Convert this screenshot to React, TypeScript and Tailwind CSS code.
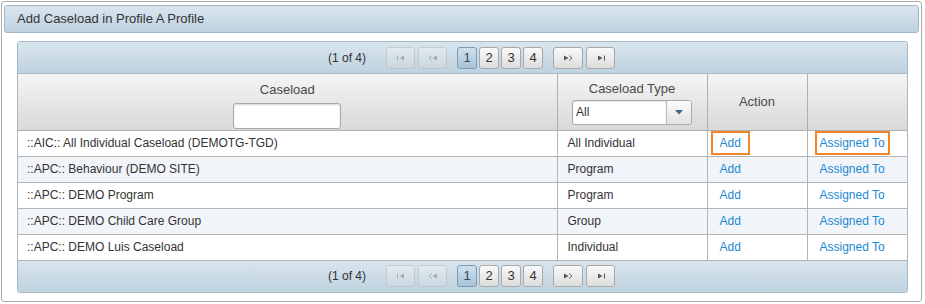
import React from "react";

const rows = [
  { name: "::AIC:: All Individual Caseload (DEMOTG-TGD)", type: "All Individual", focus: true },
  { name: "::APC:: Behaviour (DEMO SITE)", type: "Program" },
  { name: "::APC:: DEMO Program", type: "Program" },
  { name: "::APC:: DEMO Child Care Group", type: "Group" },
  { name: "::APC:: DEMO Luis Caseload", type: "Individual" },
];

function NavIcon({ kind }: { kind: "first" | "prev" | "next" | "last" }) {
  return (
    <svg width="10" height="6" viewBox="0 0 10 6" fill="#555" aria-hidden="true">
      {kind === "first" && (
        <>
          <rect x="1" y="0.5" width="1" height="5" />
          <path d="M8 0.5 L3.5 3 L8 5.5 Z" />
        </>
      )}
      {kind === "prev" && (
        <>
          <path d="M4 0.5 L1 3 L4 5.5" fill="none" stroke="#555" strokeWidth="0.9" />
          <path d="M9 0.5 L4.5 3 L9 5.5 Z" />
        </>
      )}
      {kind === "next" && (
        <>
          <path d="M1 0.5 L5.5 3 L1 5.5 Z" />
          <path d="M6 0.5 L9 3 L6 5.5" fill="none" stroke="#555" strokeWidth="0.9" />
        </>
      )}
      {kind === "last" && (
        <>
          <path d="M2 0.5 L6.5 3 L2 5.5 Z" />
          <rect x="8" y="0.5" width="1" height="5" />
        </>
      )}
    </svg>
  );
}

function Pager({ bottom = false }: { bottom?: boolean }) {
  const btn =
    "flex h-[22px] items-center justify-center rounded-[3px] border border-[#a9a9a9] bg-gradient-to-b from-[#fafafa] to-[#dcdcdc]";
  return (
    <div
      className={`flex items-center justify-center bg-gradient-to-b from-[#d8e5ee] to-[#bfd2df] pl-[18px] ${
        bottom ? "h-[31px]" : "h-[32px] border-b border-[#a9b9c6]"
      }`}
    >
      <span className="mr-[20px] text-[12px] text-[#333]">(1 of 4)</span>
      <div className="flex items-center">
        <span className={`${btn} w-[29px] opacity-35`}>
          <NavIcon kind="first" />
        </span>
        <span className={`${btn} ml-[3px] w-[29px] opacity-35`}>
          <NavIcon kind="prev" />
        </span>
        <div className="ml-[10px] flex gap-[2px]">
          {["1", "2", "3", "4"].map((p) => (
            <span
              key={p}
              className={
                p === "1"
                  ? "flex h-[22px] w-[20px] items-center justify-center rounded-[3px] border border-[#7a9bb5] bg-gradient-to-b from-[#cfe0ec] to-[#a8c3d7] text-[13px] text-[#2d4d66]"
                  : `${btn} w-[20px] text-[13px] text-[#333]`
              }
            >
              {p}
            </span>
          ))}
        </div>
        <span className={`${btn} ml-[10px] w-[30px]`}>
          <NavIcon kind="next" />
        </span>
        <span className={`${btn} ml-[3px] w-[29px]`}>
          <NavIcon kind="last" />
        </span>
      </div>
    </div>
  );
}

export default function App() {
  return (
    <div className="h-[304px] w-[925px] bg-white pl-[1px] pt-[1px] font-['Liberation_Sans',Arial,sans-serif]">
      <div className="h-[301px] w-[921px] rounded-[3px] border border-[#ababab] px-[2px] pt-[3px]">
        <div className="flex h-[28px] items-center rounded-[3px] border border-[#a3b6c5] bg-gradient-to-b from-[#d9e6ef] to-[#bfd2df] pl-[12px] text-[13px] text-[#333]">
          Add Caseload in Profile A Profile
        </div>

        <div className="ml-[13px] mt-[8px] w-[891px] overflow-hidden rounded-[3px] border border-[#a9b9c6]">
          <Pager />
          <table className="w-full table-fixed border-collapse text-[12px] text-[#333]">
            <colgroup>
              <col className="w-[539px]" />
              <col className="w-[150px]" />
              <col className="w-[100px]" />
              <col className="w-[100px]" />
            </colgroup>
            <thead>
              <tr className="h-[56px] bg-gradient-to-b from-[#f5f5f5] to-[#d9d9d9] text-[13px] text-[#4a4a4a]">
                <th className="border-b border-[#b0b0b0] align-top font-normal">
                  <div className="pt-[6px]">Caseload</div>
                  <input
                    readOnly
                    className="mt-[3px] h-[26px] w-[108px] rounded-[3px] border border-[#a9a9a9] bg-white shadow-[inset_0_1px_2px_rgba(0,0,0,0.15)]"
                  />
                </th>
                <th className="border-b border-l border-[#b0b0b0] align-top font-normal">
                  <div className="pt-[5px]">Caseload Type</div>
                  <div className="mx-auto mt-[1px] flex h-[25px] w-[120px] overflow-hidden rounded-[3px] border border-[#a9a9a9] bg-white text-left">
                    <span className="flex flex-1 items-center pl-[3px] text-[12px] text-[#333] shadow-[inset_0_1px_2px_rgba(0,0,0,0.12)]">
                      All
                    </span>
                    <span className="flex w-[25px] items-center justify-center border-l border-[#bdbdbd] bg-gradient-to-b from-[#fbfbfb] to-[#e2e2e2]">
                      <svg width="8" height="5" viewBox="0 0 8 5" aria-hidden="true">
                        <path d="M0 0 H8 L4 4.5 Z" fill="#3f6787" />
                      </svg>
                    </span>
                  </div>
                </th>
                <th className="border-b border-l border-[#b0b0b0] font-normal">Action</th>
                <th className="border-b border-l border-[#b0b0b0] font-normal"></th>
              </tr>
            </thead>
            <tbody>
              {rows.map((r, i) => (
                <tr key={r.name} className={`h-[26px] ${i % 2 === 1 ? "bg-[#f1f4f9]" : "bg-white"}`}>
                  <td className="border-b border-[#b4b4b4] pl-[9px]">{r.name}</td>
                  <td className="border-b border-l border-[#b4b4b4] pl-[10px]">{r.type}</td>
                  <td className="border-b border-l border-[#b4b4b4] pl-[3px]">
                    <span
                      className={`inline-block px-[7px] py-[1px] text-[#1a8ad3] ${
                        r.focus ? "border-2 border-[#f0852a]" : "border-2 border-transparent"
                      }`}
                    >
                      Add
                    </span>
                  </td>
                  <td className="border-b border-l border-[#b4b4b4] pl-[7px]">
                    <span
                      className={`inline-block px-[3px] py-[1px] text-[#1a8ad3] ${
                        r.focus ? "border-2 border-[#f0852a]" : "border-2 border-transparent"
                      }`}
                    >
                      Assigned To
                    </span>
                  </td>
                </tr>
              ))}
            </tbody>
          </table>
          <Pager bottom />
        </div>
      </div>
    </div>
  );
}
